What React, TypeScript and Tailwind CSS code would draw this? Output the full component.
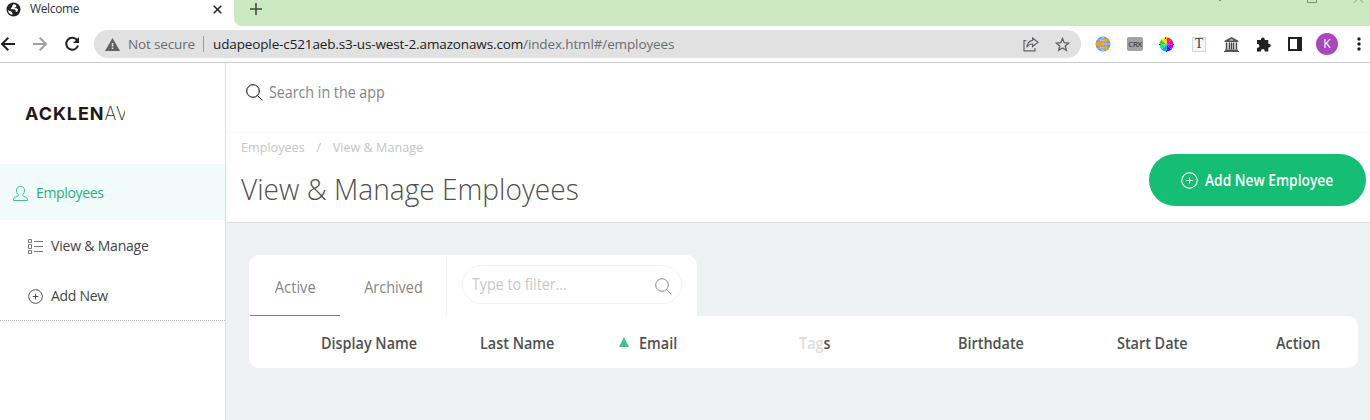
import React from "react";

type IconProps = { className?: string };

const Globe = () => (
  <svg className="size-[15px] shrink-0" viewBox="0 0 15 15">
    <circle cx="7.5" cy="7.5" r="7" fill="#202124" />
    <path d="M7.800 1.900 6.200 3.700v1.200L4.800 6.100v1.200h3.700l1.200 1.200v1.200h1.500l1-2.200-1.500-1.200h-2V5.200h1.500V3Z M1.900 8.200l3.300 1.300 1.200 1.500v1.800Q2.600 12 1.900 8.200Z" fill="#fff" />
  </svg>
);

const Arrow = ({ className }: IconProps) => (
  <svg className={className} viewBox="0 0 16 16" fill="none" stroke="currentColor" strokeWidth="2">
    <path d="M15 8H2.5M8.3 1.8 2 8l6.3 6.2" />
  </svg>
);

const Reload = () => (
  <svg className="size-4 shrink-0 text-[#202124]" viewBox="0 0 16 16" fill="none">
    <path d="M13.1 4.2A6 6 0 1 0 14 9.5" stroke="currentColor" strokeWidth="2" />
    <path d="M15 1v6H9Z" fill="currentColor" />
  </svg>
);

const Warning = () => (
  <svg className="h-[13px] w-[15px] shrink-0" viewBox="0 0 15 13">
    <path d="M7.5 0 15 13H0Z" fill="#5f6368" />
    <path d="M6.8 5h1.5v3.4H6.8zM6.8 9.6h1.5v1.5H6.8z" fill="#e1e1e1" />
  </svg>
);

const Share = () => (
  <svg className="h-[15px] w-4 shrink-0" viewBox="0 0 16 15" fill="none" stroke="#5f6368" strokeWidth="1.2">
    <path d="M3.4 3.6H1v10.2h11V11" />
    <path d="M9.6 1 15 5.2 9.6 9.4V7C6.800 6.900 5 8 3.800 10.300 4.200 6.300 6.200 3.800 9.600 3.300Z" />
  </svg>
);

const Star = () => (
  <svg className="size-[15px] shrink-0" viewBox="0 0 15 15" fill="none" stroke="#5f6368" strokeWidth="1.4">
    <path d="m7.500 1.600 1.700 4.100 4.400.4-3.300 2.900 1 4.300-3.800-2.300-3.800 2.300 1-4.300-3.300-2.900 4.400-.4Z" />
  </svg>
);

const ShareGlobe = () => (
  <svg className="size-4 shrink-0" viewBox="0 0 16 16">
    <circle cx="8" cy="8" r="7.500" fill="#6f9ac8" />
    <path d="M8 .5v15M.5 8h15M2.500 3.500Q8 6 13.500 3.500M2.500 12.500Q8 10 13.500 12.500M8 .5Q2 8 8 15.500M8 .5q6 7.500 0 15" fill="none" stroke="#c0d4ee" strokeWidth=".7" />
    <path d="M12 4 4 8l8 4.300" fill="none" stroke="#fb9c13" strokeWidth="1.800" />
    <g fill="#fb9c13"><circle cx="12" cy="4" r="2" /><circle cx="3.500" cy="8" r="2.500" /><circle cx="12" cy="12.300" r="2" /></g>
  </svg>
);

const ColorWheel = () => (
  <svg className="size-[15px] shrink-0" viewBox="-7.500 -7.500 15 15">
    <path d="M0 0V-7A7 7 0 0 1 5-5Z" fill="#ff2020" />
    <path d="M0 0 5-5A7 7 0 0 1 7 0Z" fill="#ff00a8" />
    <path d="M0 0H7A7 7 0 0 1 5 5Z" fill="#c000ff" />
    <path d="M0 0 5 5A7 7 0 0 1 0 7Z" fill="#2525ff" />
    <path d="M0 0V7A7 7 0 0 1-5 5Z" fill="#00a8ff" />
    <path d="M0 0-5 5A7 7 0 0 1-7 0Z" fill="#00f0a0" />
    <path d="M0 0H-7A7 7 0 0 1-5-5Z" fill="#30e000" />
    <path d="M0 0-5-5A7 7 0 0 1 0-7Z" fill="#ffd800" />
    <path d="M-1-7.500V-5.500M7.500 0H6M-7.500 0H-6M0 7.500V6" stroke="#333" strokeWidth="1" />
  </svg>
);

const Bank = () => (
  <svg className="h-[15px] w-[15px] shrink-0" viewBox="0 0 15 15">
    <path d="M7.500 0 14.500 3.700V5H.5V3.700Z" fill="#555" />
    <path d="M5 3.500 7.500 2 10 3.500Z" fill="#ddd" />
    <path d="M1.500 5.500h12v7h-12z" fill="#ccc" />
    <path d="M2.500 5.500v7M5.500 5.500v7M9.500 5.500v7M12.500 5.500v7M7.500 5.500v7" stroke="#444" strokeWidth="1.100" />
    <path d="M1 12.500h13V14H15v1H0v-1h1z" fill="#555" />
  </svg>
);

const Puzzle = () => (
  <svg className="size-[15px] shrink-0" viewBox="0 0 15 15">
    <path d="M1.500 3H5v-.5a1.900 1.900 0 0 1 3.800 0V3h3.500v3.700h.5a1.900 1.900 0 0 1 0 3.800h-.5v4H8.700v-.6a1.900 1.900 0 0 0-3.800 0v.6H1v-3.700h.5a1.900 1.900 0 0 0 0-3.800H1V3Z" fill="#202124" />
  </svg>
);

const Search = ({ className }: IconProps) => (
  <svg className={className} viewBox="0 0 17 17" fill="none" stroke="currentColor">
    <circle cx="7" cy="7" r="6.300" />
    <path d="m11.500 11.500 5 5" />
  </svg>
);

const PlusCircle = ({ className }: IconProps) => (
  <svg className={className} viewBox="0 0 16 16" fill="none" stroke="currentColor">
    <circle cx="8" cy="8" r="7.300" />
    <path d="M8 5v6M5 8h6" />
  </svg>
);

const Person = () => (
  <svg className="size-[15px] shrink-0" viewBox="0 0 15 15" fill="none" stroke="#3ec090">
    <path d="M5.500 8.800C3.800 7.200 3.300 5.800 3.500 3.800 3.700 1.600 5.200.5 7.500.5s3.800 1.100 4 3.300c.2 2-.3 3.400-2 5 .2 1.200 1 1.500 2.500 2 1.600.5 2.500 1.200 2.500 3.700H.5c0-2.500.9-3.200 2.500-3.700 1.500-.5 2.300-.8 2.500-2Z" />
  </svg>
);

const ListIcon = () => (
  <svg className="size-[15px] shrink-0" viewBox="0 0 15 15" fill="none" stroke="#777">
    <path d="M.5.5h3v3h-3zM.5 5.500h3v4h-3zM.5 11.500h3v3h-3z" />
    <path d="M6 2.500h9M6 7.500h9M6 12.500h9" />
  </svg>
);

function BrowserChrome() {
  return (
    <header className="shrink-0 font-['Open_Sans','Noto_Sans',sans-serif]">
      <div className="flex h-[26px] bg-white">
        <div className="flex h-[18px] w-[234px] shrink-0 items-center bg-white pl-[6px] pr-[12px] text-[12px] text-[#30343a]">
          <Globe />
          <span className="ml-[9px] flex-1 tracking-[-0.35px]">Welcome</span>
          <svg className="size-[9px]" viewBox="0 0 9 9" stroke="#202124" strokeWidth="1.500"><path d="m.7.7 7.600 7.600M8.300.7.7 8.300" /></svg>
        </div>
        <div className="flex flex-1 justify-between overflow-hidden rounded-bl-[8px] bg-[#cbe9c0] pl-4">
          <svg className="mt-[3px] h-3 w-3" viewBox="0 0 12 12" stroke="#414b40" strokeWidth="1.600"><path d="M6 0v12M0 6h12" /></svg>
          <svg className="h-[3px] w-[152px]" viewBox="0 0 152 3" fill="none" stroke="#7c8c77"><path d="M1 .5h2M89.500 0v2.500h9V0M136 2.500l2.500-2.500M145 2.500 142.500 0" /></svg>
        </div>
      </div>
      <div className="flex h-[37px] items-center border-b border-[#cbcbcb] bg-white pr-[9px]">
        <Arrow className="size-4 shrink-0 text-[#202124]" />
        <Arrow className="ml-4 size-4 shrink-0 rotate-180 text-[#a1a1a1]" />
        <div className="ml-4"><Reload /></div>
        <div className="ml-[14px] flex h-7 w-[987px] shrink-0 items-center rounded-full bg-[#e1e1e1] pl-[11px] pr-[11px] text-[13.5px]">
          <Warning />
          <span className="ml-[8px] w-[68px] whitespace-nowrap tracking-[-0.15px] text-[#6b6e72]">Not secure</span>
          <span className="ml-[7px] h-4 w-px bg-[#999]" />
          <span className="ml-[9px] flex-1 whitespace-nowrap tracking-[-0.13px] text-[#202124]">
            udapeople-c521aeb.s3-us-west-2.amazonaws.com<span className="text-[#6b6e72]">/index.html#/employees</span>
          </span>
          <Share />
          <div className="ml-4"><Star /></div>
        </div>
        <div className="ml-[14px] flex flex-1 items-center">
          <ShareGlobe />
          <span className="ml-4 flex h-[14px] w-4 items-center justify-center rounded-[2px] bg-[#a2a2a2] text-[8px] leading-none tracking-[-0.3px] text-[#222]">CRX</span>
          <span className="ml-4"><ColorWheel /></span>
          <span className="ml-[18px] flex h-[15px] w-[14px] items-center justify-center border border-[#d6d6d6] bg-[#f7f7f7] font-['Liberation_Serif',serif] text-[14px] leading-none text-[#444]">T</span>
          <span className="ml-[18px]"><Bank /></span>
          <span className="ml-[17px]"><Puzzle /></span>
          <span className="ml-[17px] h-[14px] w-[14px] border-2 border-r-[5px] border-[#202124]" />
          <span className="ml-[14px] flex size-[22px] items-center justify-center rounded-full bg-[#ab47bc] text-[12px] text-white">K</span>
          <svg className="ml-[19px] h-[14px] w-[4px]" viewBox="0 0 4 14" fill="#202124"><circle cx="2" cy="2" r="1.700" /><circle cx="2" cy="7" r="1.700" /><circle cx="2" cy="12" r="1.700" /></svg>
        </div>
      </div>
    </header>
  );
}

function Sidebar() {
  return (
    <aside className="flex w-[226px] shrink-0 flex-col border-r border-[#dcdfdf] bg-white text-[14px] text-[#444]">
      <div className="flex h-[101px] items-center pl-[25px]">
        <div className="w-[100px] overflow-hidden whitespace-nowrap font-['Inter',sans-serif] text-[18px] leading-6 text-[#231a18]">
          <span className="font-bold tracking-[0.95px]">ACKLEN</span><span className="font-extralight tracking-[1px]">AV</span>
        </div>
      </div>
      <div className="flex h-14 items-center gap-[8px] bg-[#f1fbfa] pl-[13px] pt-[2px] text-[#22b27c]">
        <Person /><span className="-mt-[2px] tracking-[-0.35px]">Employees</span>
      </div>
      <div className="flex h-[50px] items-center gap-[8px] pl-[28px] pt-[2px]">
        <ListIcon /><span className="-mt-[2px] tracking-[-0.2px]">View &amp; Manage</span>
      </div>
      <div className="flex h-[51px] items-center gap-[8px] border-b border-dotted border-[#bdbdbd] pl-[28px] pt-[2px]">
        <PlusCircle className="size-[15px] shrink-0" /><span className="-mt-[2px] tracking-[-0.3px]">Add New</span>
      </div>
    </aside>
  );
}

const columns = ["Display Name", "Last Name", "Email", "Tags", "Birthdate", "Start Date", "Action"];

function Table() {
  return (
    <div className="flex h-[52px] items-center rounded-[10px] rounded-tl-none bg-white pl-[72px] pt-px text-[16px] font-semibold text-[#505050]">
      {columns.map((name) => (
        <div key={name} className="relative w-[159.2px] shrink-0 whitespace-nowrap last:w-auto">
          {name === "Email" && (
            <svg className="absolute -left-5 top-[6px] h-[10px] w-[10px]" viewBox="0 0 10 10"><path d="M5 0 10 10H0Z" fill="#3fc48d" /></svg>
          )}
          <span className="inline-block origin-left scale-x-[0.9]">
            {name === "Tags" ? <><span className="text-[#dcdcdc]">Tag</span>s</> : name}
          </span>
        </div>
      ))}
    </div>
  );
}

function Main() {
  return (
    <main className="flex min-w-0 flex-1 flex-col bg-[#edf1f2]">
      <div className="flex h-[69px] items-start gap-[6px] bg-white pl-5 pt-[18px]">
        <Search className="mt-[3px] size-[17px] text-black" />
        <span className="origin-left scale-x-[0.89] text-[16px] leading-[22px] text-[#858585]">Search in the app</span>
      </div>
      <div className="flex h-[91px] shrink-0 justify-between border-b border-[#dcdfe0] border-t border-t-[#fafafa] bg-white pl-[15px] pr-[4px]">
        <div>
          <div className="mt-[4px] flex origin-left scale-x-[0.935] text-[13.5px] leading-5 font-medium text-[#c6c6c6]">
            <span>Employees</span><span className="mx-[12.5px]">/</span><span>View &amp; Manage</span>
          </div>
          <h1 className="mt-[12px] origin-left scale-x-[0.937] whitespace-nowrap text-[30px] leading-[40px] font-light text-[#505050]">View &amp; Manage Employees</h1>
        </div>
        <button className="mt-[21px] flex h-[52px] w-[217px] items-center rounded-[26px] bg-[#16bd75] pl-8 text-[16px] font-semibold text-white">
          <PlusCircle className="mr-[7px] size-[17px] shrink-0" /><span className="origin-left scale-x-[0.86] whitespace-nowrap">Add New Employee</span>
        </button>
      </div>
      <div className="pl-[23px] pr-3 pt-8">
        <div className="flex h-[61px] w-[448px] overflow-hidden rounded-t-[10px] bg-white text-[16px] text-[#858585]">
          <div className="ml-px flex w-[90px] items-center justify-center border-b border-[#16b37b] pt-[3px]"><span className="scale-x-[0.92]">Active</span></div>
          <div className="flex w-[107px] items-center justify-center border-r border-[#f0f2f3] pt-[2px]"><span className="scale-x-[0.9]">Archived</span></div>
          <div className="ml-[15px] mt-[10px] flex h-[39px] w-[220px] items-center rounded-full border border-[#f2f2f2] pl-[9px] pr-[9px]">
            <span className="-mt-[2px] flex-1 origin-left scale-x-[0.89] text-[#c9c9c9]">Type to filter...</span>
            <Search className="mt-[3px] size-[17px] text-[#888]" />
          </div>
        </div>
        <Table />
      </div>
    </main>
  );
}

export default function App() {
  return (
    <div className="flex h-[420px] w-[1370px] flex-col overflow-hidden bg-white font-['Open_Sans','Noto_Sans',sans-serif]">
      <BrowserChrome />
      <div className="flex flex-1"><Sidebar /><Main /></div>
    </div>
  );
}
